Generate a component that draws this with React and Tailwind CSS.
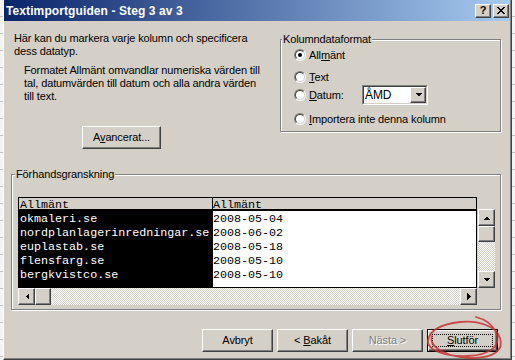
import React from "react";

const raised =
  "border border-t-white border-l-white border-r-[#404040] border-b-[#404040] shadow-[inset_-1px_-1px_0_#808080] bg-[#d4d0c8]";
const checker =
  "bg-[conic-gradient(#ffffff_25%,#d4d0c8_0_50%,#ffffff_0_75%,#d4d0c8_0)] bg-[length:2px_2px]";

function Radio({ checked }) {
  return (
    <div className="w-[12px] h-[12px] rounded-full border border-t-[#808080] border-l-[#808080] border-b-white border-r-white shrink-0">
      <div className="w-full h-full rounded-full border border-t-[#404040] border-l-[#404040] border-b-[#d4d0c8] border-r-[#d4d0c8] bg-white flex items-center justify-center">
        {checked && <div className="w-[4px] h-[4px] rounded-full bg-black" />}
      </div>
    </div>
  );
}

function Tri({ dir }) {
  const pts = {
    up: "0,4 7,4 3.5,0.5",
    down: "0,0 7,0 3.5,3.5",
    left: "4,0 4,7 0.5,3.5",
    right: "0,0 0,7 3.5,3.5",
  }[dir];
  const w = dir === "up" || dir === "down" ? 7 : 4;
  const h = dir === "up" || dir === "down" ? 4 : 7;
  return (
    <svg width={w} height={h} viewBox={`0 0 ${w} ${h}`} shapeRendering="crispEdges">
      <polygon points={pts} fill="#000" />
    </svg>
  );
}

function SBtn({ dir, className = "" }) {
  return (
    <div className={`${raised} w-[17px] h-[17px] flex items-center justify-center shrink-0 ${className}`}>
      <Tri dir={dir} />
    </div>
  );
}

const rows = [
  ["okmaleri.se", "2008-05-04"],
  ["nordplanlagerinredningar.se", "2008-06-02"],
  ["euplastab.se", "2008-05-18"],
  ["flensfarg.se", "2008-05-10"],
  ["bergkvistco.se", "2008-05-10"],
];

export default function App() {
  return (
    <div
      className="w-[515px] h-[360px] flex overflow-hidden bg-white text-black"
      style={{ fontFamily: '"Liberation Sans", Arial, sans-serif' }}
    >
      <div className="w-[3px] h-full bg-[repeating-linear-gradient(to_bottom,#f4f4f4_0,#f4f4f4_16px,#c0c0c0_16px,#c0c0c0_17px)]" />
      <div className="w-[509px] h-[360px] border-l border-l-white border-r border-r-[#404040] border-b border-b-[#404040] flex flex-col">
        <div className="flex-1 border-r border-r-[#808080] border-b border-b-[#808080] flex flex-col">
          {/* Title bar */}
          <div className="h-[21px] flex items-center bg-[linear-gradient(to_right,#0a246a,#a6caf0)] pl-[2px] pr-[1px]">
            <div className="flex-1 text-white font-bold text-[12px] leading-[14px] pt-[1px] tracking-[0.1px]">
              Textimportguiden - Steg 3 av 3
            </div>
            <div className={`${raised} w-[16px] h-[14px] flex items-center justify-center text-[11px] font-bold leading-none`}>
              ?
            </div>
            <div className={`${raised} w-[16px] h-[14px] ml-[2px] flex items-center justify-center`}>
              <svg width="8" height="7" viewBox="0 0 8 7" shapeRendering="crispEdges">
                <path d="M0 0h2v1h-2zM6 0h2v1h-2zM1 1h2v1h-2zM5 1h2v1h-2zM2 2h4v1h-4zM3 3h2v1h-2zM2 4h4v1h-4zM1 5h2v1h-2zM5 5h2v1h-2zM0 6h2v1h-2zM6 6h2v1h-2z" fill="#000" />
              </svg>
            </div>
          </div>

          {/* Body */}
          <div className="relative flex-1 bg-[#d4d0c8] flex flex-col text-[11px] leading-[13px] tracking-[-0.12px]">
            {/* top section */}
            <div className="h-[147px] pt-[11px] flex items-start">
              <div className="w-[272px] pl-[10px]">
                <p>
                  Här kan du markera varje kolumn och specificera
                  <br />
                  dess datatyp.
                </p>
                <p className="mt-[6px] ml-[10px]">
                  Formatet Allmänt omvandlar numeriska värden till
                  <br />
                  tal, datumvärden till datum och alla andra värden
                  <br />
                  till text.
                </p>
                <button className={`${raised} mt-[23px] ml-[68px] w-[79px] h-[23px] flex items-center justify-center`}>
                  <span>
                    A<u className="underline-offset-[1px]">v</u>ancerat...
                  </span>
                </button>
              </div>
              <fieldset className="ml-[4px] mt-[1px] w-[221px] h-[99px] border border-[#808080] shadow-[1px_1px_0_#ffffff,inset_1px_1px_0_#ffffff]">
                <legend className="ml-[1px] px-[1px] bg-[#d4d0c8]">Kolumndataformat</legend>
                <div className="flex flex-col pl-[13px] pt-[1px]">
                  <div className="h-[16px] flex items-center">
                    <Radio checked />
                    <span className="ml-[3px]">
                      All<u>m</u>änt
                    </span>
                  </div>
                  <div className="h-[16px] mt-[6px] flex items-center">
                    <Radio />
                    <span className="ml-[3px]">
                      <u>T</u>ext
                    </span>
                  </div>
                  <div className="h-[20px] flex items-center">
                    <Radio />
                    <span className="ml-[3px] w-[53px]">
                      <u>D</u>atum:
                    </span>
                    <div className="w-[66px] h-[20px] border border-t-[#808080] border-l-[#808080] border-b-white border-r-white">
                      <div className="w-full h-full border border-t-[#404040] border-l-[#404040] border-b-[#d4d0c8] border-r-[#d4d0c8] bg-white flex items-center">
                        <span className="flex-1 pl-[1px] text-[12px]">ÅMD</span>
                        <div className={`${raised} w-[16px] h-[16px] flex items-center justify-center`}>
                          <Tri dir="down" />
                        </div>
                      </div>
                    </div>
                  </div>
                  <div className="h-[16px] mt-[6px] flex items-center">
                    <Radio />
                    <span className="ml-[3px]">
                      <u>I</u>mportera inte denna kolumn
                    </span>
                  </div>
                </div>
              </fieldset>
            </div>

            {/* preview */}
            <fieldset className="ml-[7px] w-[490px] h-[142px] border border-[#808080] shadow-[1px_1px_0_#ffffff,inset_1px_1px_0_#ffffff]">
              <legend className="ml-[3px] px-[1px] bg-[#d4d0c8]">Förhandsgranskning</legend>
              <div className="pl-[6px] pt-[16px] flex items-start">
                <div className="w-[459px] flex flex-col">
                  <div
                    className="h-[91px] border border-black bg-white flex tracking-normal"
                    style={{ fontFamily: '"Liberation Mono", "Courier New", monospace' }}
                  >
                    <div className="w-[194px] flex flex-col border-r border-black">
                      <div className="h-[13px] bg-[#d4d0c8] border-b-2 border-black overflow-hidden text-[11.7px] leading-[14px] pl-[1px] underline">
                        Allmänt
                      </div>
                      <div className="flex-1 bg-black text-white text-[11.7px] leading-[14px] pl-[1px] pt-[1px]">
                        {rows.map((r) => (
                          <div key={r[0]}>{r[0]}</div>
                        ))}
                      </div>
                    </div>
                    <div className="flex-1 flex flex-col">
                      <div className="h-[13px] bg-[#d4d0c8] border-b-2 border-black overflow-hidden text-[11.7px] leading-[14px] underline">
                        Allmänt
                      </div>
                      <div className="flex-1 bg-white text-[11.7px] leading-[14px] pt-[1px]">
                        {rows.map((r) => (
                          <div key={r[0]}>{r[1]}</div>
                        ))}
                      </div>
                    </div>
                  </div>
                  <div className={`h-[17px] flex ${checker}`}>
                    <SBtn dir="left" />
                    <div className={`${raised} w-[16px] h-[17px]`} />
                    <div className="flex-1" />
                    <SBtn dir="right" />
                  </div>
                </div>
                <div className={`w-[17px] h-[79px] mt-[12px] ml-[1px] flex flex-col ${checker}`}>
                  <SBtn dir="up" />
                  <div className={`${raised} w-[17px] h-[16px]`} />
                  <div className="flex-1" />
                  <SBtn dir="down" />
                </div>
              </div>
            </fieldset>

            {/* buttons */}
            <div className="mt-[19px] flex justify-end pr-[12px] gap-[4px]">
              <button className={`${raised} w-[71px] h-[23px] flex items-center justify-center`}>Avbryt</button>
              <button className={`${raised} w-[71px] h-[23px] flex items-center justify-center`}>
                <span>
                  &lt; <u>B</u>akåt
                </span>
              </button>
              <button className={`${raised} w-[71px] h-[23px] flex items-center justify-center text-[#808080] [text-shadow:1px_1px_0_#ffffff]`}>
                Nästa &gt;
              </button>
              <button className="w-[71px] h-[23px] border border-black">
                <div className={`${raised} w-full h-full p-[3px]`}>
                  <div className="w-full h-full border border-dotted border-black flex items-center justify-center">
                    <span>
                      <u>S</u>lutför
                    </span>
                  </div>
                </div>
              </button>
            </div>

            <svg
              className="absolute left-[416px] top-[293px] pointer-events-none"
              width="90"
              height="46"
              viewBox="0 0 90 46"
              fill="none"
            >
              <path
                d="M 12 22 C 8 34, 30 44, 52 44 C 74 44, 84 36, 80 24 C 76 12, 58 6, 40 8 C 22 10, 10 16, 8 26 C 6 36, 26 43, 48 42 C 70 41, 82 32, 76 18 C 72 10, 64 5, 56 3"
                stroke="#c83232"
                strokeOpacity="0.85"
                strokeWidth="1.8"
                strokeLinecap="round"
              />
            </svg>
          </div>
        </div>
      </div>
      <div className="w-[3px] h-full bg-[repeating-linear-gradient(to_bottom,#f4f4f4_0,#f4f4f4_16px,#c0c0c0_16px,#c0c0c0_17px)]" />
    </div>
  );
}
